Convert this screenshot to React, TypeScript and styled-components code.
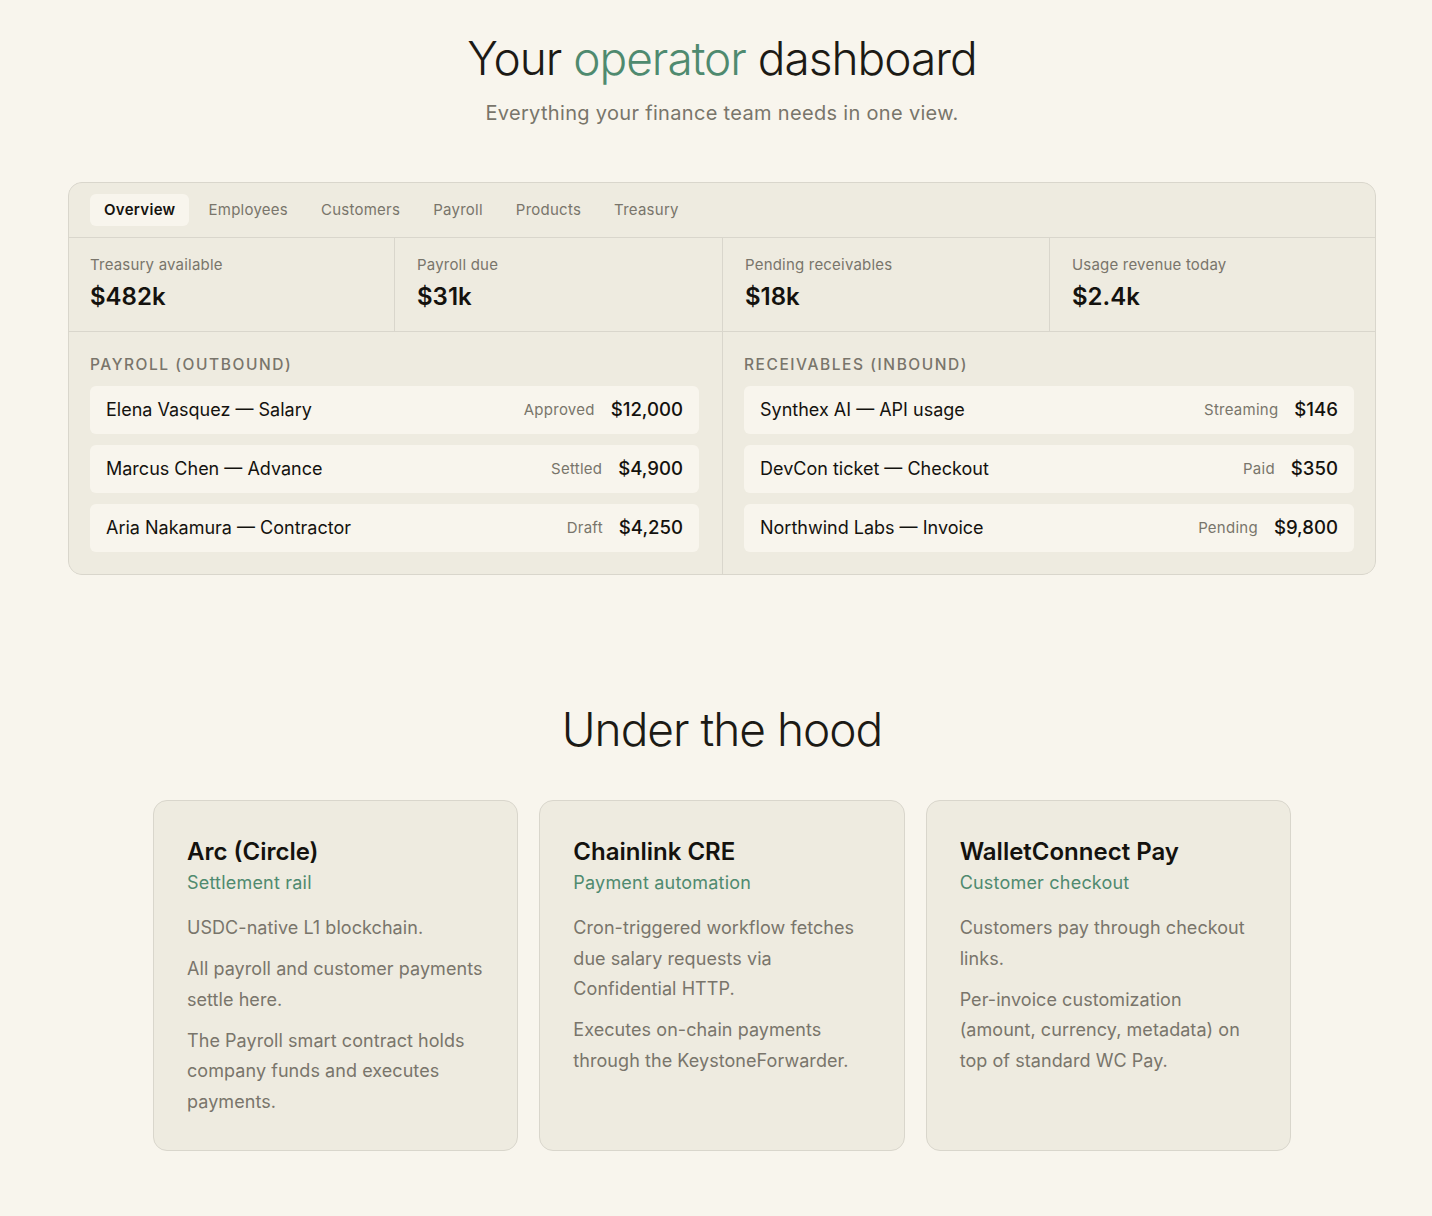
import React from 'react';
import styled, {createGlobalStyle} from 'styled-components';

const GlobalStyle = createGlobalStyle`
  * { box-sizing: border-box; }
  html, body { margin: 0; padding: 0; overflow: hidden; }
  body {
    background: #f8f5ed;
    color: #171510;
    font-family: Inter, "Liberation Sans", sans-serif;
  }
`

const Page = styled.div`
  width: 1444px;
  height: 1216px;
  overflow: hidden;
`
const Hero = styled.header`
  padding-top: 30px;
  text-align: center;
`
const Title = styled.h1`
  margin: 0;
  height: 56px;
  font-size: 46px;
  line-height: 56px;
  font-weight: 300;
  letter-spacing: -1px;
  color: #1c1a15;
`
const Accent = styled.span`
  color: #4f8a6f;
`
const Subtitle = styled.p`
  margin: 13px 0 0;
  font-size: 20px;
  line-height: 28px;
  letter-spacing: 0.32px;
  color: #79756b;
`
const Panel = styled.section`
  margin: 55px 68px 0;
  background: #d9d6cc;
  border: 1px solid #d9d6cc;
  border-radius: 14px;
  overflow: hidden;
`
const Tabs = styled.nav`
  display: flex;
  align-items: center;
  gap: 5px;
  height: 55px;
  padding: 0 21px;
  background: #eeebe0;
  border-bottom: 1px solid #d9d6cc;
`
const Tab = styled.div<{ $active?: boolean }>`
  padding: 0 14px;
  height: 32px;
  line-height: 32px;
  border-radius: 6px;
  font-size: 15px;
  letter-spacing: ${p => p.$active ? 0.3 : 0.25}px;
  font-weight: ${p => p.$active ? 600 : 400};
  color: ${p => p.$active ? '#14120e' : '#79756b'};
  background: ${p => p.$active ? '#f8f5ed' : 'transparent'};
`
const Stats = styled.div`
  display: grid;
  grid-template-columns: 325px 327px 326px 325px;
  gap: 1px;
  border-bottom: 1px solid #d9d6cc;
`
const Stat = styled.div`
  height: 93px;
  padding: 17px 21px 0 22px;
  background: #eeebe0;
  &:first-child { padding-left: 21px; }
`
const StatLabel = styled.div`
  font-size: 15px;
  line-height: 20px;
  letter-spacing: 0.2px;
  color: #79756b;
`
const StatValue = styled.div`
  margin-top: 6px;
  font-size: 24px;
  line-height: 32px;
  font-weight: 600;
  color: #14120e;
`
const Lists = styled.div`
  display: grid;
  grid-template-columns: 653px 652px;
  gap: 1px;
`
const ListColumn = styled.div`
  padding: 23px 21px 22px;
  background: #eeebe0;
  &:first-child { padding-right: 23px; }
`
const ListHeading = styled.div`
  height: 20px;
  margin-bottom: 11px;
  font-size: 15.5px;
  line-height: 20px;
  font-weight: 500;
  letter-spacing: 1.55px;
  color: #79756b;
`
const Rows = styled.div`
  display: grid;
  gap: 11px;
`
const Row = styled.div`
  display: flex;
  align-items: center;
  height: 48px;
  padding: 0 16px 2px;
  background: #f8f5ed;
  border-radius: 6px;
`
const RowName = styled.span`
  flex: 1;
  font-size: 18px;
  color: #14120e;
`
const RowStatus = styled.span`
  margin-right: 16px;
  font-size: 15px;
  letter-spacing: 0.25px;
  color: #79756b;
`
const RowAmount = styled.span`
  font-size: 18.6px;
  font-weight: 500;
  color: #14120e;
`
const SectionTitle = styled.h2`
  margin: 126px 0 0;
  height: 56px;
  text-align: center;
  font-size: 46px;
  line-height: 56px;
  font-weight: 300;
  letter-spacing: -1px;
  color: #1c1a15;
`
const Cards = styled.div`
  display: grid;
  grid-template-columns: repeat(3, 1fr);
  gap: 21px;
  width: 1138px;
  margin: 43px auto 0;
`
const Card = styled.article`
  height: 351px;
  padding: 35px 33px;
  background: #eeebe0;
  border: 1px solid #d9d6cc;
  border-radius: 14px;
`
const CardTitle = styled.h3`
  margin: 0;
  font-size: 24px;
  line-height: 32px;
  font-weight: 600;
  color: #14120e;
`
const CardTag = styled.div`
  margin: 2px 0 17px;
  font-size: 18px;
  line-height: 26px;
  letter-spacing: 0.2px;
  color: #4f8a6f;
`
const CardText = styled.p`
  margin: 0 0 10.5px;
  font-size: 18px;
  line-height: 30.6px;
  letter-spacing: 0.06px;
  color: #79756b;
`

const tabs = ['Overview', 'Employees', 'Customers', 'Payroll', 'Products', 'Treasury']
const stats = [
    {label: 'Treasury available', value: '$482k'},
    {label: 'Payroll due', value: '$31k'},
    {label: 'Pending receivables', value: '$18k'},
    {label: 'Usage revenue today', value: '$2.4k'},
]
const lists = [
    {
        heading: 'PAYROLL (OUTBOUND)',
        rows: [
            {name: 'Elena Vasquez — Salary', status: 'Approved', amount: '$12,000'},
            {name: 'Marcus Chen — Advance', status: 'Settled', amount: '$4,900'},
            {name: 'Aria Nakamura — Contractor', status: 'Draft', amount: '$4,250'},
        ],
    },
    {
        heading: 'RECEIVABLES (INBOUND)',
        rows: [
            {name: 'Synthex AI — API usage', status: 'Streaming', amount: '$146'},
            {name: 'DevCon ticket — Checkout', status: 'Paid', amount: '$350'},
            {name: 'Northwind Labs — Invoice', status: 'Pending', amount: '$9,800'},
        ],
    },
]
const cards = [
    {
        title: 'Arc (Circle)',
        tag: 'Settlement rail',
        text: [
            'USDC-native L1 blockchain.',
            'All payroll and customer payments settle here.',
            'The Payroll smart contract holds company funds and executes payments.',
        ],
    },
    {
        title: 'Chainlink CRE',
        tag: 'Payment automation',
        text: [
            'Cron-triggered workflow fetches due salary requests via Confidential HTTP.',
            'Executes on-chain payments through the KeystoneForwarder.',
        ],
    },
    {
        title: 'WalletConnect Pay',
        tag: 'Customer checkout',
        text: [
            'Customers pay through checkout links.',
            'Per-invoice customization (amount, currency, metadata) on top of standard WC Pay.',
        ],
    },
]

function App() {
    return (
        <Page>
            <GlobalStyle/>
            <Hero>
                <Title>Your <Accent>operator</Accent> dashboard</Title>
                <Subtitle>Everything your finance team needs in one view.</Subtitle>
            </Hero>
            <Panel>
                <Tabs>
                    {tabs.map((tab, i) => <Tab key={tab} $active={i === 0}>{tab}</Tab>)}
                </Tabs>
                <Stats>
                    {stats.map(stat => (
                        <Stat key={stat.label}>
                            <StatLabel>{stat.label}</StatLabel>
                            <StatValue>{stat.value}</StatValue>
                        </Stat>
                    ))}
                </Stats>
                <Lists>
                    {lists.map(list => (
                        <ListColumn key={list.heading}>
                            <ListHeading>{list.heading}</ListHeading>
                            <Rows>
                                {list.rows.map(row => (
                                    <Row key={row.name}>
                                        <RowName>{row.name}</RowName>
                                        <RowStatus>{row.status}</RowStatus>
                                        <RowAmount>{row.amount}</RowAmount>
                                    </Row>
                                ))}
                            </Rows>
                        </ListColumn>
                    ))}
                </Lists>
            </Panel>
            <SectionTitle>Under the hood</SectionTitle>
            <Cards>
                {cards.map(card => (
                    <Card key={card.title}>
                        <CardTitle>{card.title}</CardTitle>
                        <CardTag>{card.tag}</CardTag>
                        {card.text.map(text => <CardText key={text}>{text}</CardText>)}
                    </Card>
                ))}
            </Cards>
        </Page>
    );
}

export default App;
